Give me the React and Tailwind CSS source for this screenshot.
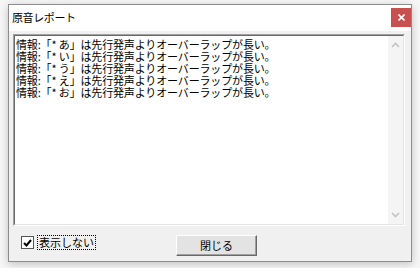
import React from "react";

const font = { fontFamily: '"Noto Sans CJK JP", "Noto Sans", sans-serif' };

const lines = ["あ", "い", "う", "え", "お"];

export default function App() {
  return (
    <div className="w-[420px] h-[268px] bg-[#f6f6f6] pt-[4px] pl-[8px] overflow-hidden" style={font}>
      <div className="w-[404px] h-[258px] border border-[#8c8c8c] bg-[#f0f0f0] flex flex-col shadow-[0_2px_8px_rgba(0,0,0,0.22)]">
        {/* Title bar */}
        <div className="h-[26px] bg-white flex items-start justify-between">
          <div className="pl-[3px] pt-[4px] text-[11px] leading-[16px] tracking-[-0.4px] text-black">原音レポート</div>
          <div className="mt-[3px] w-[20px] h-[19px] bg-[#c75050] flex items-center justify-center">
            <svg width="7" height="7" viewBox="0 0 7 7">
              <path d="M0.5 0.5 L6.5 6.5 M6.5 0.5 L0.5 6.5" stroke="white" strokeWidth="1.6" />
            </svg>
          </div>
        </div>
        {/* Body */}
        <div className="flex-1 flex flex-col pt-[3px] pl-[4px] pr-[5px]">
          <div className="w-[392px] h-[192px] border border-t-[#a0a0a0] border-l-[#a0a0a0] border-b-white border-r-white">
            <div className="w-full h-full border border-t-[#696969] border-l-[#696969] border-b-[#e3e3e3] border-r-[#e3e3e3] bg-white flex">
              <div className="flex-1 pl-[1px] pt-[2px] text-[11px] leading-[12px] tracking-[-0.15px] text-black whitespace-nowrap">
                {lines.map((c) => (
                  <div key={c}>情報:「* {c}」は先行発声よりオーバーラップが長い。</div>
                ))}
              </div>
              <div className="w-[15px] bg-[#f4f4f4] flex flex-col items-center justify-between py-[6px]">
                <svg width="9" height="6" viewBox="0 0 9 6">
                  <path d="M1 5 L4.5 1.5 L8 5" stroke="#c3c3c3" strokeWidth="1.6" fill="none" />
                </svg>
                <svg width="9" height="6" viewBox="0 0 9 6">
                  <path d="M1 1 L4.5 4.5 L8 1" stroke="#c3c3c3" strokeWidth="1.6" fill="none" />
                </svg>
              </div>
            </div>
          </div>
          {/* Bottom row */}
          <div className="flex items-start mt-[9px]">
            <div className="ml-[8px] mt-[1px] w-[13px] h-[13px] border border-[#555] bg-white flex items-center justify-center">
              <svg width="9" height="8" viewBox="0 0 9 8">
                <path d="M1 4 L3.5 6.5 L8 1" stroke="black" strokeWidth="2" fill="none" />
              </svg>
            </div>
            <div className="ml-[3px] px-[1px] border border-dotted border-black text-[11px] leading-[13px] text-black">表示しない</div>
            <div className="ml-[80px] w-[81px] h-[21px] bg-[#e3e3e3] border border-t-white border-l-white border-b-[#696969] border-r-[#696969] shadow-[inset_-1px_-1px_0_#a0a0a0] flex items-center justify-center text-[11px] text-black">閉じる</div>
          </div>
        </div>
      </div>
    </div>
  );
}
